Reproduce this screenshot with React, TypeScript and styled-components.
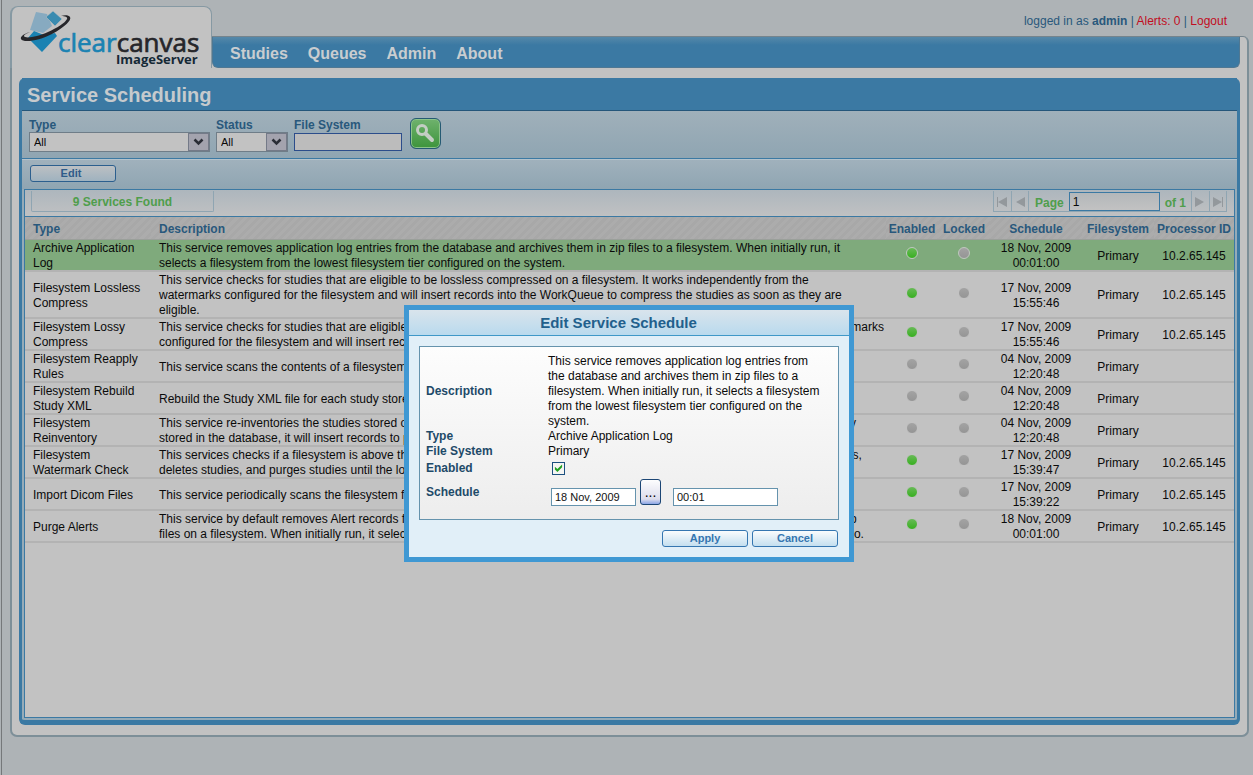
import React from 'react';
import styled, { createGlobalStyle, css } from 'styled-components';

const Global = createGlobalStyle`
  * { box-sizing: border-box; }
  html, body { margin: 0; padding: 0; }
  body {
    background: #aeb3b6;
    font-family: "Liberation Sans", Arial, sans-serif;
    font-size: 12px;
    line-height: 15px;
    color: #0a0a0a;
  }
  button, input, select { font-family: inherit; margin: 0; }
`;

const blue = '#3b79a3';
const navy = '#29587c';
const green = '#4f9e4c';
const surface = '#c2c2c2';

const Page = styled.div`
  position: relative;
  min-height: 100vh;
  margin-left: 1px;
  border-left: 1px solid #75787a;
  padding: 6px 4px 38px 8px;
`;

const Header = styled.header`
  display: flex;
  align-items: flex-start;
  position: relative;
  z-index: 1;
`;

const LogoTab = styled.div`
  width: 202px;
  height: 62px;
  background: ${surface};
  border: 1px solid #8699a3;
  border-width: 1px 1px 0 2px;
  border-radius: 8px 8px 0 0;
  overflow: hidden;
  svg { display: block; }
`;

const HeaderMain = styled.div`
  flex: 1;
  display: flex;
  flex-direction: column;
`;

const Account = styled.div`
  height: 30px;
  padding: 8px 22px 0 0;
  text-align: right;
  color: ${navy};
`;

const AlertLink = styled.a`
  color: #c20d22;
  text-decoration: none;
`;

const NavShell = styled.div`
  height: 32px;
  border-top: 1px solid #75848d;
  border-right: 2px solid #7d8f98;
  border-top-right-radius: 6px;
  padding-right: 7px;
  background: ${surface};
`;

const Nav = styled.nav`
  display: flex;
  gap: 20px;
  height: 31px;
  padding: 7px 17px 0;
  background: linear-gradient(#5588a9, ${blue} 8px);
  border: 1px solid #4f7893;
  border-width: 0 1px 1px;
  border-radius: 0 0 6px 6px;
`;

const NavLink = styled.a`
  color: #c9cdd0;
  font-size: 16px;
  line-height: 20px;
  font-weight: bold;
  text-decoration: none;
`;

const Frame = styled.main`
  background: ${surface};
  border: 2px solid #7d8f98;
  border-top: 0;
  border-radius: 0 0 7px 7px;
  padding: 10px 7px 10px;
`;

const Panel = styled.section`
  background: #95abb8;
  border: 3px solid ${blue};
  border-width: 0 3px 5px;
  border-radius: 6px;
`;

const PanelTitle = styled.h1`
  margin: 0;
  height: 33px;
  padding: 5px 5px 0;
  background: ${blue};
  border-bottom: 1px solid #25567a;
  color: #c6cacd;
  font-size: 20px;
  line-height: 24px;
`;

const Filters = styled.form`
  display: flex;
  align-items: flex-start;
  height: 48px;
  padding: 7px 7px 0;
  gap: 6px;
  background: linear-gradient(#a0b0ba, #8fa5b2);
  border-bottom: 1px solid ${blue};
`;

const Field = styled.label<{ $w: number }>`
  display: flex;
  flex-direction: column;
  width: ${p => p.$w}px;
  color: ${navy};
  font-weight: bold;
  line-height: 14px;
`;

const SelectBox = styled.span`
  position: relative;
  display: block;
  height: 20px;
  svg {
    position: absolute;
    right: 1px;
    top: 1px;
    pointer-events: none;
  }
`;

const Select = styled.select`
  appearance: none;
  width: 100%;
  height: 20px;
  padding: 0 4px;
  border: 1px solid #6f7d88;
  border-radius: 0;
  background: ${surface};
  color: #0a0a0a;
  font-size: 11px;
`;

const FilterInput = styled.input`
  width: 108px;
  height: 18px;
  margin-top: 1px;
  border: 1px solid #2c4d8b;
  background: #bcbcbc;
`;

const SearchButton = styled.button`
  width: 31px;
  height: 31px;
  margin-left: 2px;
  padding: 0;
  border: 1px solid #255a73;
  border-radius: 6px;
  background: linear-gradient(#6fb26d, #3d943c);
  box-shadow: inset 0 0 0 1px #8cc38a;
  svg { display: block; }
`;

const Toolbar = styled.div`
  height: 30px;
  padding: 5px 8px 0;
  border-top: 1px solid #b4c3cc;
  background: linear-gradient(#a0b1bc, #8fa5b2);
`;

const PushButton = styled.button<{ $dim?: boolean }>`
  display: block;
  width: 86px;
  height: 17px;
  padding: 0;
  border-radius: 3px;
  font-size: 11px;
  line-height: 15px;
  font-weight: bold;
  text-align: center;
  ${p => p.$dim ? css`
    border: 1px solid #2c5f8e;
    color: #2f5c8a;
    padding-right: 4px;
    background: linear-gradient(#bcc0c3, #9fb2bf);
  ` : css`
    border: 1px solid #3576b0;
    color: #3576b0;
    background: linear-gradient(#fafcfd, #c4dfef);
  `}
`;

const Grid = styled.div`
  margin: 0 2px 2px;
  min-height: 529px;
  background: ${surface};
  border: 1px solid ${blue};
`;

const PagerBar = styled.div`
  display: flex;
  justify-content: space-between;
  height: 27px;
  padding: 1px 7px 0 6px;
  background: linear-gradient(#adb6bd, #c0c1c2);
  border-bottom: 1px solid ${blue};
`;

const Found = styled.div`
  width: 183px;
  height: 21px;
  border: 1px solid #8fa5b2;
  border-top: 0;
  border-radius: 0 0 2px 2px;
  text-align: center;
  line-height: 22px;
  font-weight: bold;
  color: ${green};
`;

const Pager = styled.div`
  display: flex;
  height: 21px;
  border: 1px solid #8fa5b2;
  border-top: 0;
  color: ${green};
  font-weight: bold;
`;

const PagerButton = styled.button`
  width: 17px;
  padding: 0;
  border: 0;
  background: none;
  svg { display: block; }
  & + & { border-left: 1px solid #8fa5b2; }
`;

const PagerPage = styled.label`
  display: flex;
  align-items: flex-start;
  gap: 5px;
  padding: 0 5px 0 6px;
  border: 1px solid #8fa5b2;
  border-width: 0 1px;
  line-height: 24px;
`;

const PageInput = styled.input`
  width: 91px;
  height: 19px;
  margin-top: 1px;
  padding: 0 3px;
  border: 1px solid ${blue};
  background: linear-gradient(#b3b7ba, #c2c2c2);
  font-size: 12px;
  color: #0a0a0a;
`;

const Table = styled.table`
  width: 100%;
  border-collapse: separate;
  border-spacing: 0;
  table-layout: fixed;
`;

const Th = styled.th<{ $center?: boolean }>`
  height: 23px;
  padding: ${p => (p.$center ? '2px 0 0' : '2px 8px 0')};
  background: repeating-linear-gradient(135deg, #acacac 0 3px, #a8a8a8 3px 6px);
  border-bottom: 1px solid #9a9f9a;
  color: ${navy};
  text-align: ${p => (p.$center ? 'center' : 'left')};
  white-space: nowrap;
`;

const Row = styled.tr<{ $selected?: boolean }>`
  background: ${p => (p.$selected ? '#7faa7c' : 'transparent')};
`;

const Td = styled.td<{ $center?: boolean }>`
  padding: ${p => (p.$center ? '1px 0 0' : '1px 0 0 8px')};
  border-bottom: 1px solid #b3b3b3;
  box-shadow: inset 0 -1px #b3b3b3;
  text-align: ${p => (p.$center ? 'center' : 'left')};
  white-space: ${p => (p.$center ? 'normal' : 'pre')};
`;

const Dot = styled.span<{ $on?: boolean; $ring?: boolean }>`
  display: block;
  width: 12px;
  height: 12px;
  margin: 0 auto 6px;
  border-radius: 50%;
  border: 1px solid ${p => (p.$ring ? '#c0c8c0' : surface)};
  background: ${p => (p.$on ? 'linear-gradient(#69ba58, #37b01f)' : 'linear-gradient(#a3a3a3, #959595)')};
`;

const Layer = styled.div`
  position: absolute;
  inset: 0;
  display: flex;
  justify-content: center;
  align-items: flex-start;
  padding: 305px 0 0 3px;
  z-index: 2;
`;

const Dialog = styled.section`
  width: 450px;
  background: #e1eff8;
  border: 5px solid #3f98d3;
`;

const DialogTitle = styled.h2`
  margin: 0;
  height: 26px;
  padding: 1px 21px 0 0;
  border-bottom: 1px solid #3f98c8;
  background: linear-gradient(#d9e4ec, #b9daee);
  color: #22608c;
  font-size: 15px;
  line-height: 24px;
  text-align: center;
`;

const DialogBody = styled.div`
  margin: 10px 10px 0;
  padding: 7px 6px 12px;
  border: 1px solid #6593ad;
  background: linear-gradient(#fdfdfd, #ededed);
`;

const FormRow = styled.div<{ $h?: number }>`
  display: grid;
  grid-template-columns: 122px 1fr;
  align-items: center;
  min-height: ${p => p.$h ?? 15}px;
  padding-right: 6px;
`;

const FormLabel = styled.label`
  color: #1e4a69;
  font-weight: bold;
`;

const Controls = styled.div`
  display: flex;
  align-items: flex-end;
  padding-left: 3px;
`;

const Check = styled.input`
  appearance: none;
  display: grid;
  place-items: center;
  width: 13px;
  height: 13px;
  margin-left: 4px;
  border: 1px solid #1d5180;
  background: #f5f5f3;
  &:checked::before {
    content: "";
    width: 9px;
    height: 9px;
    background: #21a121;
    clip-path: polygon(10% 35%, 38% 60%, 90% 10%, 90% 42%, 38% 95%, 10% 68%);
  }
`;

const TextInput = styled.input<{ $w: number }>`
  width: ${p => p.$w}px;
  height: 18px;
  padding: 0 3px;
  border: 1px solid #6593ad;
  background: #fff;
  color: #111;
  font-size: 11px;
`;

const PickButton = styled.button`
  width: 21px;
  height: 26px;
  margin: 0 12px 1px 4px;
  padding: 0;
  border: 1px solid #1c4675;
  border-radius: 3px;
  background: linear-gradient(#fdfdfe, #dcdcec 80%, #8ba6e6);
  color: #000;
  font-size: 14px;
`;

const DialogActions = styled.div`
  display: flex;
  justify-content: flex-end;
  gap: 4px;
  padding: 10px 11px;
`;

const Logo = () => (
  <svg width="199" height="61" viewBox="12 7 199 61" role="img" aria-label="clearcanvas ImageServer">
    <path d="M36 12L47 14L52 26L43 33L30 30Z" fill="#87aac0" />
    <path d="M53 11L62 19L55 26L46 17Z" fill="#3a8bb0" stroke={surface} strokeWidth="0.5" />
    <path d="M28 38L34 31L44 35L55 33L57 36L42 52Z" fill="#1a82b2" />
    <path d="M30 32C23 34 20 37 21 39C23 43 39 41 52 34C65 27 72 20 70 17C69 15 64 15 61 16C65 16 68 17 67 19C65 23 57 28 48 32C37 37 25 39 24 36C24 35 27 33 30 32Z" fill="#26262a" />
    <g fontFamily="'Open Sans', sans-serif">
      <text x="58" y="52" fontSize="26" fill="#1a82b2" stroke="#1a82b2" strokeWidth="0.7">clear<tspan fill="#26262a" stroke="#26262a">canvas</tspan></text>
      <text x="116" y="64" fontSize="13" fontWeight="700" fill="#152936">ImageServer</text>
    </g>
  </svg>
);

const Arrow = () => (
  <svg width="21" height="18" viewBox="0 0 21 18">
    <rect x="0.5" y="0.5" width="20" height="17" fill="#a3a3ae" stroke="#747a88" />
    <path d="M6.5 6.5L10.5 10.5L14.5 6.5" fill="none" stroke="#2a2d36" strokeWidth="2.5" />
  </svg>
);

const PagerIcon = ({ flip, bar }: { flip?: boolean; bar?: boolean }) => (
  <svg width="17" height="20" viewBox="0 0 17 20">
    <g transform={flip ? 'matrix(-1 0 0 1 16 0)' : undefined} fill="#93989c">
      <path d="M13 6V16L4 11Z" />
      {bar && <rect x="3" y="6" width="1" height="10" />}
    </g>
  </svg>
);

type Service = { type: string; text: string; on?: boolean; date: string; time: string; id?: boolean };
const services: Service[] = [
  { type: 'Archive Application\nLog', text: 'This service removes application log entries from the database and archives them in zip files to a filesystem. When initially run, it\nselects a filesystem from the lowest filesystem tier configured on the system.', on: true, date: '18 Nov, 2009', time: '00:01:00', id: true },
  { type: 'Filesystem Lossless\nCompress', text: 'This service checks for studies that are eligible to be lossless compressed on a filesystem. It works independently from the\nwatermarks configured for the filesystem and will insert records into the WorkQueue to compress the studies as soon as they are\neligible.', on: true, date: '17 Nov, 2009', time: '15:55:46', id: true },
  { type: 'Filesystem Lossy\nCompress', text: 'This service checks for studies that are eligible to be lossy compressed on the filesystem. It works independently from all the watermarks\nconfigured for the filesystem and will insert records into the WorkQueue to compress the studies as soon as they are eligible.', on: true, date: '17 Nov, 2009', time: '15:55:46', id: true },
  { type: 'Filesystem Reapply\nRules', text: 'This service scans the contents of a filesystem and reapplies rules to each study.', date: '04 Nov, 2009', time: '12:20:48' },
  { type: 'Filesystem Rebuild\nStudy XML', text: 'Rebuild the Study XML file for each study stored on the Filesystem', date: '04 Nov, 2009', time: '12:20:48' },
  { type: 'Filesystem\nReinventory', text: 'This service re-inventories the studies stored on a filesystem. When a study is located on the filesystem that is not present currently\nstored in the database, it will insert records to process the study.', date: '04 Nov, 2009', time: '12:20:48' },
  { type: 'Filesystem\nWatermark Check', text: 'This services checks if a filesystem is above the high watermark. If the filesystem is above the high watermark, this migrates studies,\ndeletes studies, and purges studies until the low watermark is reached.', on: true, date: '17 Nov, 2009', time: '15:39:47', id: true },
  { type: 'Import Dicom Files', text: 'This service periodically scans the filesystem for dicom files and imports them.', on: true, date: '17 Nov, 2009', time: '15:39:22', id: true },
  { type: 'Purge Alerts', text: 'This service by default removes Alert records from the database after a configured time. It can also archive the Alert records into zip\nfiles on a filesystem. When initially run, it selects a filesystem from the lowest filesystem tier to archive all the deleted Alert records to.', on: true, date: '18 Nov, 2009', time: '00:01:00', id: true },
];

export default function App() {
  return (
    <Page>
      <Global />
      <Header>
        <LogoTab><Logo /></LogoTab>
        <HeaderMain>
          <Account>
            logged in as <b>admin</b> | <AlertLink href="#alerts">Alerts: 0</AlertLink> | <AlertLink href="#logout">Logout</AlertLink>
          </Account>
          <NavShell>
            <Nav>
              {['Studies', 'Queues', 'Admin', 'About'].map(n => <NavLink key={n} href={'#' + n}>{n}</NavLink>)}
            </Nav>
          </NavShell>
        </HeaderMain>
      </Header>
      <Frame>
        <Panel>
          <PanelTitle>Service Scheduling</PanelTitle>
          <Filters>
            <Field $w={181}>Type<SelectBox><Select><option>All</option></Select><Arrow /></SelectBox></Field>
            <Field $w={72}>Status<SelectBox><Select><option>All</option></Select><Arrow /></SelectBox></Field>
            <Field $w={108}>File System<FilterInput /></Field>
            <SearchButton type="button" aria-label="Search">
              <svg width="29" height="29" viewBox="0 0 29 29" fill="none" stroke="#c4cdc4">
                <circle cx="11" cy="11" r="4.5" strokeWidth="3" />
                <path d="M15 15L21 21" strokeWidth="4" strokeLinecap="round" />
              </svg>
            </SearchButton>
          </Filters>
          <Toolbar><PushButton $dim type="button">Edit</PushButton></Toolbar>
          <Grid>
            <PagerBar>
              <Found>9 Services Found</Found>
              <Pager>
                <PagerButton aria-label="First page"><PagerIcon bar /></PagerButton>
                <PagerButton aria-label="Previous page"><PagerIcon /></PagerButton>
                <PagerPage>Page<PageInput defaultValue="1" />of 1</PagerPage>
                <PagerButton aria-label="Next page"><PagerIcon flip /></PagerButton>
                <PagerButton aria-label="Last page"><PagerIcon flip bar /></PagerButton>
              </Pager>
            </PagerBar>
            <Table>
              <colgroup>
                <col style={{ width: 126 }} /><col /><col style={{ width: 52 }} /><col style={{ width: 52 }} />
                <col style={{ width: 92 }} /><col style={{ width: 72 }} /><col style={{ width: 80 }} />
              </colgroup>
              <thead>
                <tr>
                  <Th>Type</Th><Th>Description</Th><Th $center>Enabled</Th><Th $center>Locked</Th>
                  <Th $center>Schedule</Th><Th $center>Filesystem</Th><Th $center>Processor ID</Th>
                </tr>
              </thead>
              <tbody>
                {services.map((s, i) => (
                  <Row key={s.type} $selected={i === 0}>
                    <Td>{s.type}</Td>
                    <Td>{s.text}</Td>
                    <Td $center><Dot $on={s.on} $ring={i === 0} /></Td>
                    <Td $center><Dot $ring={i === 0} /></Td>
                    <Td $center>{s.date}<br />{s.time}</Td>
                    <Td $center>Primary</Td>
                    <Td $center>{s.id ? '10.2.65.145' : ''}</Td>
                  </Row>
                ))}
              </tbody>
            </Table>
          </Grid>
        </Panel>
      </Frame>
      <Layer>
        <Dialog role="dialog" aria-labelledby="dialog-title">
          <DialogTitle id="dialog-title">Edit Service Schedule</DialogTitle>
          <DialogBody>
            <FormRow>
              <FormLabel as="span">Description</FormLabel>
              <span>This service removes application log entries from the database and archives them in zip files to a filesystem. When initially run, it selects a filesystem from the lowest filesystem tier configured on the system.</span>
            </FormRow>
            <FormRow><FormLabel as="span">Type</FormLabel><span>Archive Application Log</span></FormRow>
            <FormRow><FormLabel as="span">File System</FormLabel><span>Primary</span></FormRow>
            <FormRow $h={18}><FormLabel htmlFor="enabled">Enabled</FormLabel><Check id="enabled" type="checkbox" defaultChecked /></FormRow>
            <FormRow $h={30}>
              <FormLabel htmlFor="date">Schedule</FormLabel>
              <Controls>
                <TextInput $w={85} id="date" defaultValue="18 Nov, 2009" />
                <PickButton type="button" aria-label="Pick a date">...</PickButton>
                <TextInput $w={105} aria-label="Time" defaultValue="00:01" />
              </Controls>
            </FormRow>
          </DialogBody>
          <DialogActions>
            <PushButton type="button">Apply</PushButton>
            <PushButton type="button">Cancel</PushButton>
          </DialogActions>
        </Dialog>
      </Layer>
    </Page>
  );
}
